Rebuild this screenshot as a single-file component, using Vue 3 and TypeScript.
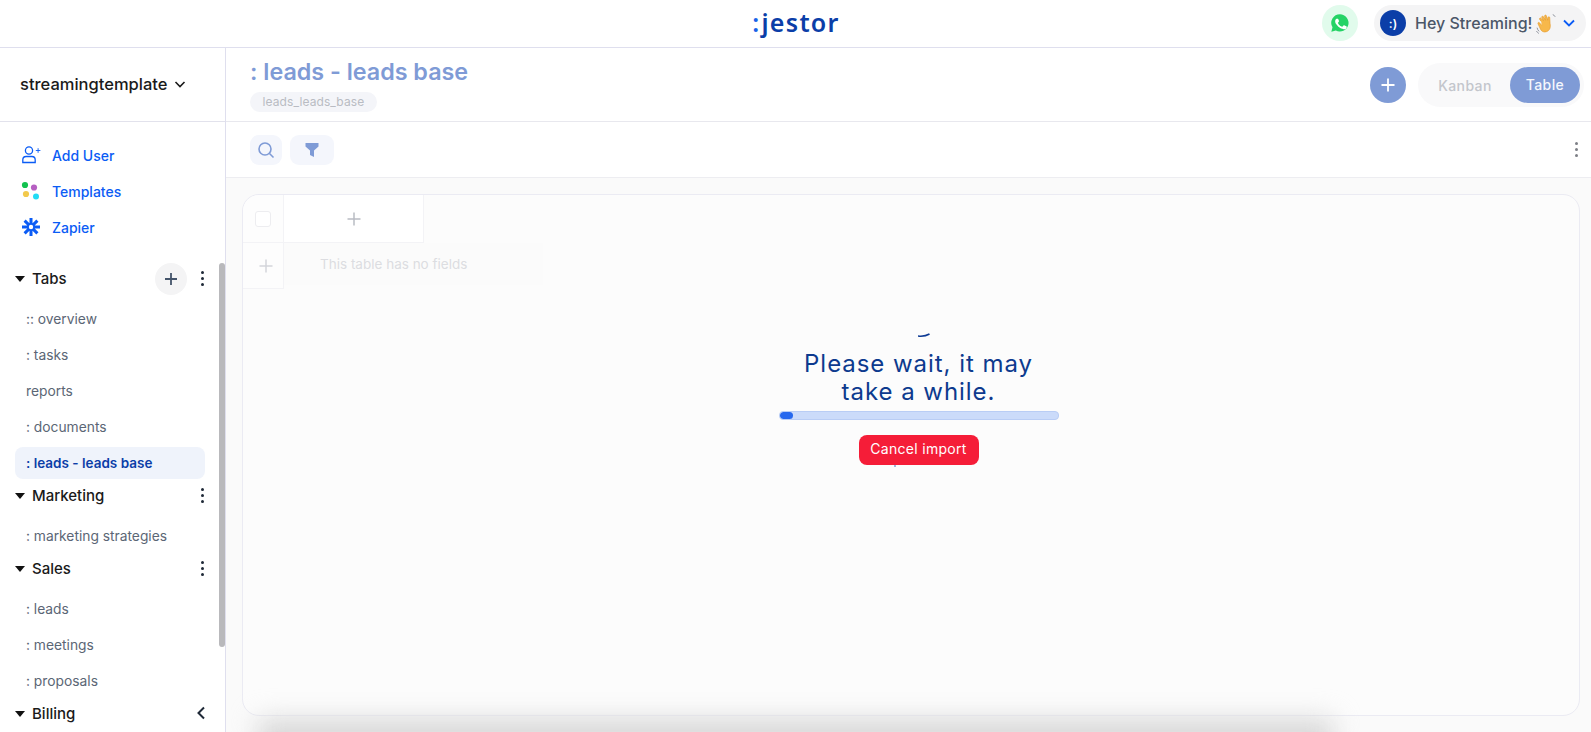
<script setup lang="ts">
interface Group { name: string; tabs: string[]; dots: boolean; add?: boolean; back?: boolean }
const groups: Group[] = [
  { name: 'Tabs', tabs: [':: overview', ': tasks', 'reports', ': documents', ': leads - leads base'], dots: true, add: true },
  { name: 'Marketing', tabs: [': marketing strategies'], dots: true },
  { name: 'Sales', tabs: [': leads', ': meetings', ': proposals'], dots: true },
  { name: 'Billing', tabs: [], dots: false, back: true },
]
const activeTab = ': leads - leads base'
</script>

<template>
  <div class="app">
    <header class="topbar">
      <div class="logo"><span class="colon">:</span>jestor</div>
      <div class="top-right">
        <div class="wa">
          <svg width="20" height="20" viewBox="0 0 24 24"><path fill="#25d366" d="M12 1.500A10.400 10.400 0 0 0 3 17.200L1.600 22.500l5.400-1.400A10.400 10.400 0 1 0 12 1.500z"/><path fill="#fff" d="M8.400 6.800c-.3 0-.7.100-1 .5-.4.400-1.200 1.200-1.200 2.800s1.200 3.300 1.400 3.500c.2.200 2.400 3.700 5.900 5.100 2.900 1.100 3.500.9 4.100.8.600-.1 2-.8 2.300-1.600.3-.8.300-1.500.2-1.600-.1-.2-.3-.3-.7-.5l-2.400-1.100c-.3-.1-.6-.2-.8.200l-1.100 1.400c-.2.200-.4.300-.8.100-.4-.2-1.500-.6-2.800-1.800-1-.9-1.700-2-1.900-2.400-.2-.4 0-.6.200-.8l.9-1.100c.1-.2.200-.4.100-.7L10 7.500c-.3-.7-.6-.7-.8-.7h-.8z"/></svg>
        </div>
        <div class="user">
          <span class="avatar">:)</span>
          <span class="hey">Hey Streaming!</span>
          <svg class="wave" width="23" height="23" viewBox="0 0 22 22"><path fill="#f7b84b" stroke="#e39a2d" stroke-width=".6" d="M6 9 4.500 7.200c-.8-1 .6-2 1.400-1.100L8 8.300 6.500 5.300c-.5-1.100 1-1.800 1.600-.8l2 3.400-.9-3.800c-.3-1.200 1.400-1.600 1.700-.4l1.300 4.200.2-2.500c.1-1.200 1.700-1.100 1.700.1l.3 5.500c.8 3.800-.3 6.700-3.400 7.800-2.600.9-4.600-.2-5.700-2.300L2.900 11.300c-.6-1 .7-1.900 1.400-1l2 2.400"/><path fill="none" stroke="#8b8f99" stroke-width=".9" d="M2 15c.2 1.500 1 2.800 2 3.500M3.700 20.500c-1-.5-1.800-1.300-2.300-2.300M17 2.500c1 .3 1.900 1.100 2.300 2.100"/></svg>
          <svg width="14" height="14" viewBox="0 0 14 14" class="caret"><path d="M2 4.500 7 9.500l5-5" fill="none" stroke="#0b5cf5" stroke-width="1.800"/></svg>
        </div>
      </div>
    </header>

    <div class="body">
      <aside class="sidebar">
        <div class="workspace">
          <span>streamingtemplate</span>
          <svg width="14" height="14" viewBox="0 0 14 14"><path d="M2.500 5 7 9.500 11.500 5" fill="none" stroke="#1a1a1a" stroke-width="1.600"/></svg>
        </div>
        <div class="side-scroll">
          <nav class="links">
            <a class="link">
              <svg width="20" height="20" viewBox="0 0 20 20" fill="none" stroke="#0b5cf5" stroke-width="1.300"><circle cx="8" cy="5.500" r="3.600"/><path d="M1.800 17.500v-2.700c0-2 1.500-3.300 3.300-3.300h5.800c1.800 0 3.300 1.300 3.300 3.300v2.700z"/><path stroke-width=".9" d="M14.800 5.500h4.600M17.100 3.200v4.600"/></svg>
              Add User
            </a>
            <a class="link">
              <svg width="20" height="20" viewBox="0 0 20 20"><circle cx="4" cy="4" r="3.100" fill="#12c24f"/><circle cx="13" cy="6.500" r="3.100" fill="#b65fc2"/><circle cx="5" cy="13" r="3.100" fill="#f2c94c"/><circle cx="15" cy="15.500" r="3" fill="#22dcf5"/></svg>
              Templates
            </a>
            <a class="link">
              <svg width="20" height="20" viewBox="0 0 20 20" stroke="#0b5cf5" stroke-width="3"><path d="M10 1v18M1 10h18M3.600 3.600l12.800 12.800M16.400 3.600 3.600 16.400"/><circle cx="10" cy="10" r="2.200" fill="#fff" stroke="none"/></svg>
              Zapier
            </a>
          </nav>
          <section v-for="g in groups" :key="g.name" class="group">
            <div class="group-head">
              <span class="tri"></span>
              <span class="group-name">{{ g.name }}</span>
              <span v-if="g.add" class="round-add">
                <svg width="14" height="14" viewBox="0 0 14 14"><path d="M7 1v12M1 7h12" stroke="#44546a" stroke-width="1.800"/></svg>
              </span>
              <span v-if="g.dots" class="dots"><i></i><i></i><i></i></span>
              <svg v-if="g.back" class="back" width="10" height="14" viewBox="0 0 10 14"><path d="M8 1.500 2.500 7 8 12.500" fill="none" stroke="#1f2937" stroke-width="2"/></svg>
            </div>
            <ul class="tabs">
              <li v-for="t in g.tabs" :key="t" class="tab" :class="{ active: t === activeTab }">{{ t }}</li>
            </ul>
          </section>
          <div class="scrollbar"></div>
        </div>
      </aside>

      <main class="main">
        <div class="subhead">
          <div>
            <h1 class="title">: leads - leads base</h1>
            <span class="tag">leads_leads_base</span>
          </div>
          <div class="sub-right">
            <span class="big-add">
              <svg width="14" height="14" viewBox="0 0 14 14"><path d="M7 .5v13M.5 7h13" stroke="#fff" stroke-width="1.800"/></svg>
            </span>
            <div class="switch">
              <span class="opt">Kanban</span>
              <span class="opt on">Table</span>
            </div>
          </div>
        </div>
        <div class="toolbar">
          <span class="tool search">
            <svg width="18" height="18" viewBox="0 0 18 18" fill="none" stroke="#7f9bd6" stroke-width="1.600"><circle cx="8" cy="8" r="6"/><path d="m12.500 12.500 4 4"/></svg>
          </span>
          <span class="tool filter">
            <svg width="14" height="16" viewBox="0 0 14 16"><path d="M.5 1h13v3.500L9 8.500V15l-4-2V8.500L.5 4.500z" fill="#7f9bd6"/></svg>
          </span>
          <span class="tool-dots"><i></i><i></i><i></i></span>
        </div>
        <div class="content">
          <div class="card">
            <div class="grid-row first">
              <span class="cell check"><span class="box"></span></span>
              <span class="cell add-col">
                <svg width="14" height="14" viewBox="0 0 14 14"><path d="M7 .5v13M.5 7h13" stroke="#b9bcc3" stroke-width="1.500"/></svg>
              </span>
            </div>
            <div class="grid-row second">
              <span class="cell check plus">
                <svg width="14" height="14" viewBox="0 0 14 14"><path d="M7 .5v13M.5 7h13" stroke="#d3d5da" stroke-width="1.500"/></svg>
              </span>
              <span class="no-fields">This table has no fields</span>
            </div>
            <div class="overlay">
              <svg class="spin" width="12" height="5" viewBox="0 0 12 5"><path d="M0 4c4 .5 8 0 11.500-2" fill="none" stroke="#0d3a94" stroke-width="1.600"/></svg>
              <p class="wait">Please wait, it may<br>take a while.</p>
              <div class="progress"><div class="bar" :style="{ width: '5%' }"></div></div>
              <button class="cancel">Cancel import</button>
            </div>
          </div>
          <div class="drop"></div>
        </div>
      </main>
    </div>
  </div>
</template>

<style>
html, body { margin: 0; overflow: hidden; background: #fff; }
</style>

<style scoped>
* { box-sizing: border-box; }
.app { width: 1591px; height: 732px; display: flex; flex-direction: column; overflow: hidden; font-family: Inter, "Noto Sans", sans-serif; }
.topbar { height: 48px; flex: none; display: flex; align-items: center; justify-content: center; border-bottom: 1px solid #dfdfee; position: relative; }
.logo { font-family: "Noto Sans", sans-serif; font-weight: 600; font-size: 25px; letter-spacing: 1.300px; color: #0b3ea8; margin-top: -3px; margin-left: 1px; }
.colon { color: #1763e8; margin-right: 1px; }
.top-right { position: absolute; right: 5px; top: 5px; display: flex; gap: 16px; align-items: center; }
.wa { width: 36px; height: 36px; border-radius: 50%; background: #e1fbec; display: flex; align-items: center; justify-content: center; }
.user { height: 36px; width: 212px; background: #f4f4f5; border-radius: 18px; display: flex; align-items: center; padding-left: 6px; }
.avatar { width: 26px; height: 26px; border-radius: 50%; background: #0b3ea8; color: #fff; font-size: 12px; font-weight: 600; display: flex; align-items: center; justify-content: center; }
.hey { margin-left: 9px; font-size: 16px; font-weight: 500; color: #4b5768; letter-spacing: 0; white-space: nowrap; }
.wave { margin-left: 3px; flex: none; }
.caret { margin-left: 4px; flex: none; }

.body { flex: 1; display: flex; min-height: 0; }
.sidebar { width: 226px; flex: none; border-right: 1px solid #dfdfee; display: flex; flex-direction: column; min-height: 0; }
.workspace { height: 74px; padding-bottom: 2px; flex: none; border-bottom: 1px solid #e2e2ec; display: flex; align-items: center; gap: 6px; padding-left: 20px; font-size: 16.500px; font-weight: 500; color: #1a1a1a; }
.side-scroll { position: relative; flex: 1; min-height: 0; overflow: hidden; padding-top: 15px; }
.links { display: flex; flex-direction: column; margin-bottom: 17px; }
.link { height: 36px; display: flex; align-items: center; gap: 11px; padding-left: 21px; font-size: 14px; font-weight: 500; color: #0b5cf5; }
.group-head { height: 33px; display: flex; align-items: center; padding-left: 15px; padding-right: 18px; position: relative; }
.tri { width: 0; height: 0; border-left: 5px solid transparent; border-right: 5px solid transparent; border-top: 6px solid #111; margin-right: 7px; }
.group-name { font-size: 15px; font-weight: 500; color: #1a1a1a; flex: 1; }
.round-add { width: 32px; height: 32px; border-radius: 50%; background: #f4f4f5; display: flex; align-items: center; justify-content: center; margin-right: 8px; }
.dots { display: flex; flex-direction: column; gap: 3px; width: 14px; align-items: center; margin-right: -2px; }
.dots i { width: 3px; height: 3px; border-radius: 50%; background: #1f2937; }
.back { margin-right: 1px; margin-top: -1px; }
.tabs { list-style: none; margin: 0; padding: 6px 0 0; }
.tab { height: 36px; margin-left: 15px; width: 190px; padding-left: 11px; display: flex; align-items: center; font-size: 13.800px; color: #5b6675; border-radius: 8px; white-space: nowrap; }
.tab.active { height: 32px; margin-top: 2px; background: #eff3fb; color: #0b3ea8; font-weight: 600; font-size: 13.500px; }
.group:nth-child(3) .tabs { padding-top: 6px; margin-bottom: -2px; }
.group:nth-child(4) .tabs { padding-top: 6px; margin-bottom: -2px; }
.group:nth-child(5) .tabs { padding-top: 0; }
.scrollbar { position: absolute; left: 219px; top: 141px; width: 6px; height: 384px; border-radius: 3px; background: #b9b9bc; }

.main { flex: 1; min-width: 0; display: flex; flex-direction: column; }
.subhead { height: 74px; flex: none; border-bottom: 1px solid #e8e8ee; display: flex; justify-content: space-between; padding: 10px 7px 0 24px; }
.title { margin: 0; font-size: 23.300px; line-height: 27px; font-weight: 600; color: #7f9bd6; white-space: nowrap; }
.tag { display: inline-block; margin-top: 7px; height: 20px; line-height: 20px; padding: 0 12.500px; font-size: 12px; color: #b9bcc3; background: #f4f5f9; border-radius: 10px; letter-spacing: .1px; }
.sub-right { display: flex; gap: 12px; align-items: flex-start; margin-top: 9px; }
.big-add { width: 36px; height: 36px; border-radius: 50%; background: #7f9bd6; display: flex; align-items: center; justify-content: center; }
.switch { width: 166px; height: 44px; margin-top: -4px; border-radius: 22px; background: #f9f9fa; display: flex; align-items: center; padding: 0 4px; justify-content: flex-end; }
.opt { font-size: 14px; font-weight: 500; color: #c3c6cc; width: 82px; padding-right: 8px; text-align: center; letter-spacing: .4px; }
.opt.on { width: 70px; padding-right: 0; height: 36px; line-height: 36px; border-radius: 18px; background: #7f9bd6; color: #f4f7fd; }
.toolbar { height: 56px; flex: none; border-bottom: 1px solid #ededf1; display: flex; align-items: center; padding: 0 13px 0 24px; gap: 8px; }
.tool { height: 30px; background: #f4f6fc; border-radius: 9px; display: flex; align-items: center; justify-content: center; }
.search { width: 32px; }
.filter { width: 44px; }
.tool-dots { margin-left: auto; display: flex; flex-direction: column; gap: 3px; }
.tool-dots i { width: 3px; height: 3px; border-radius: 50%; background: #7d7f86; }
.content { flex: 1; background: #fafafa; padding: 16px 11px 16px 16px; position: relative; min-height: 0; }
.card { position: relative; height: 100%; background: #fcfcfc; border: 1px solid #ebebf3; border-radius: 17px; overflow: hidden; }
.grid-row { display: flex; }
.grid-row.first { height: 48px; }
.grid-row.second { height: 46px; }
.cell { display: flex; align-items: center; justify-content: center; }
.check { width: 41px; background: #fdfdfd; border-right: 1px solid #f3f3f6; border-bottom: 1px solid #f3f3f6; }
.check.plus { padding-left: 6px; }
.box { width: 16px; height: 16px; border: 1px solid #ededf0; border-radius: 3px; background: #fff; }
.add-col { width: 140px; background: #fff; border-right: 1px solid #f3f3f6; border-bottom: 1px solid #f3f3f6; }
.no-fields { width: 259px; padding-left: 36px; background: #fbfbfb; display: flex; align-items: center; font-size: 13.500px; color: #dcdde1; height: 42px; white-space: nowrap; }
.overlay { position: absolute; left: 0; right: 0; top: 137px; display: flex; flex-direction: column; align-items: center; padding-left: 15px; }
.spin { margin-left: 10px; }
.wait { margin: 13px 0 0; font-size: 24px; line-height: 28px; text-align: center; color: #0d3a8e; letter-spacing: .95px; font-weight: 400; }
.progress { margin-top: 5px; width: 280px; height: 9px; background: #cbdbfa; border: 1px solid #b9cdf5; border-radius: 4px; overflow: hidden; }
.bar { height: 100%; background: #2668ee; border-radius: 4px; }
.cancel { position: relative; margin-top: 15px; width: 120px; height: 30px; padding: 0 0 3px; border: 0; border-radius: 8px; background: #f51d38; color: #fff; font-family: Inter, sans-serif; font-size: 14px; letter-spacing: .3px; }
.cancel::after { content: ""; position: absolute; left: 35px; bottom: -2px; width: 2px; height: 2px; background: #9fb4de; }
.drop { position: absolute; left: 32px; width: 1075px; top: 541px; height: 60px; background: #d8d8d8; filter: blur(13px); }
</style>
